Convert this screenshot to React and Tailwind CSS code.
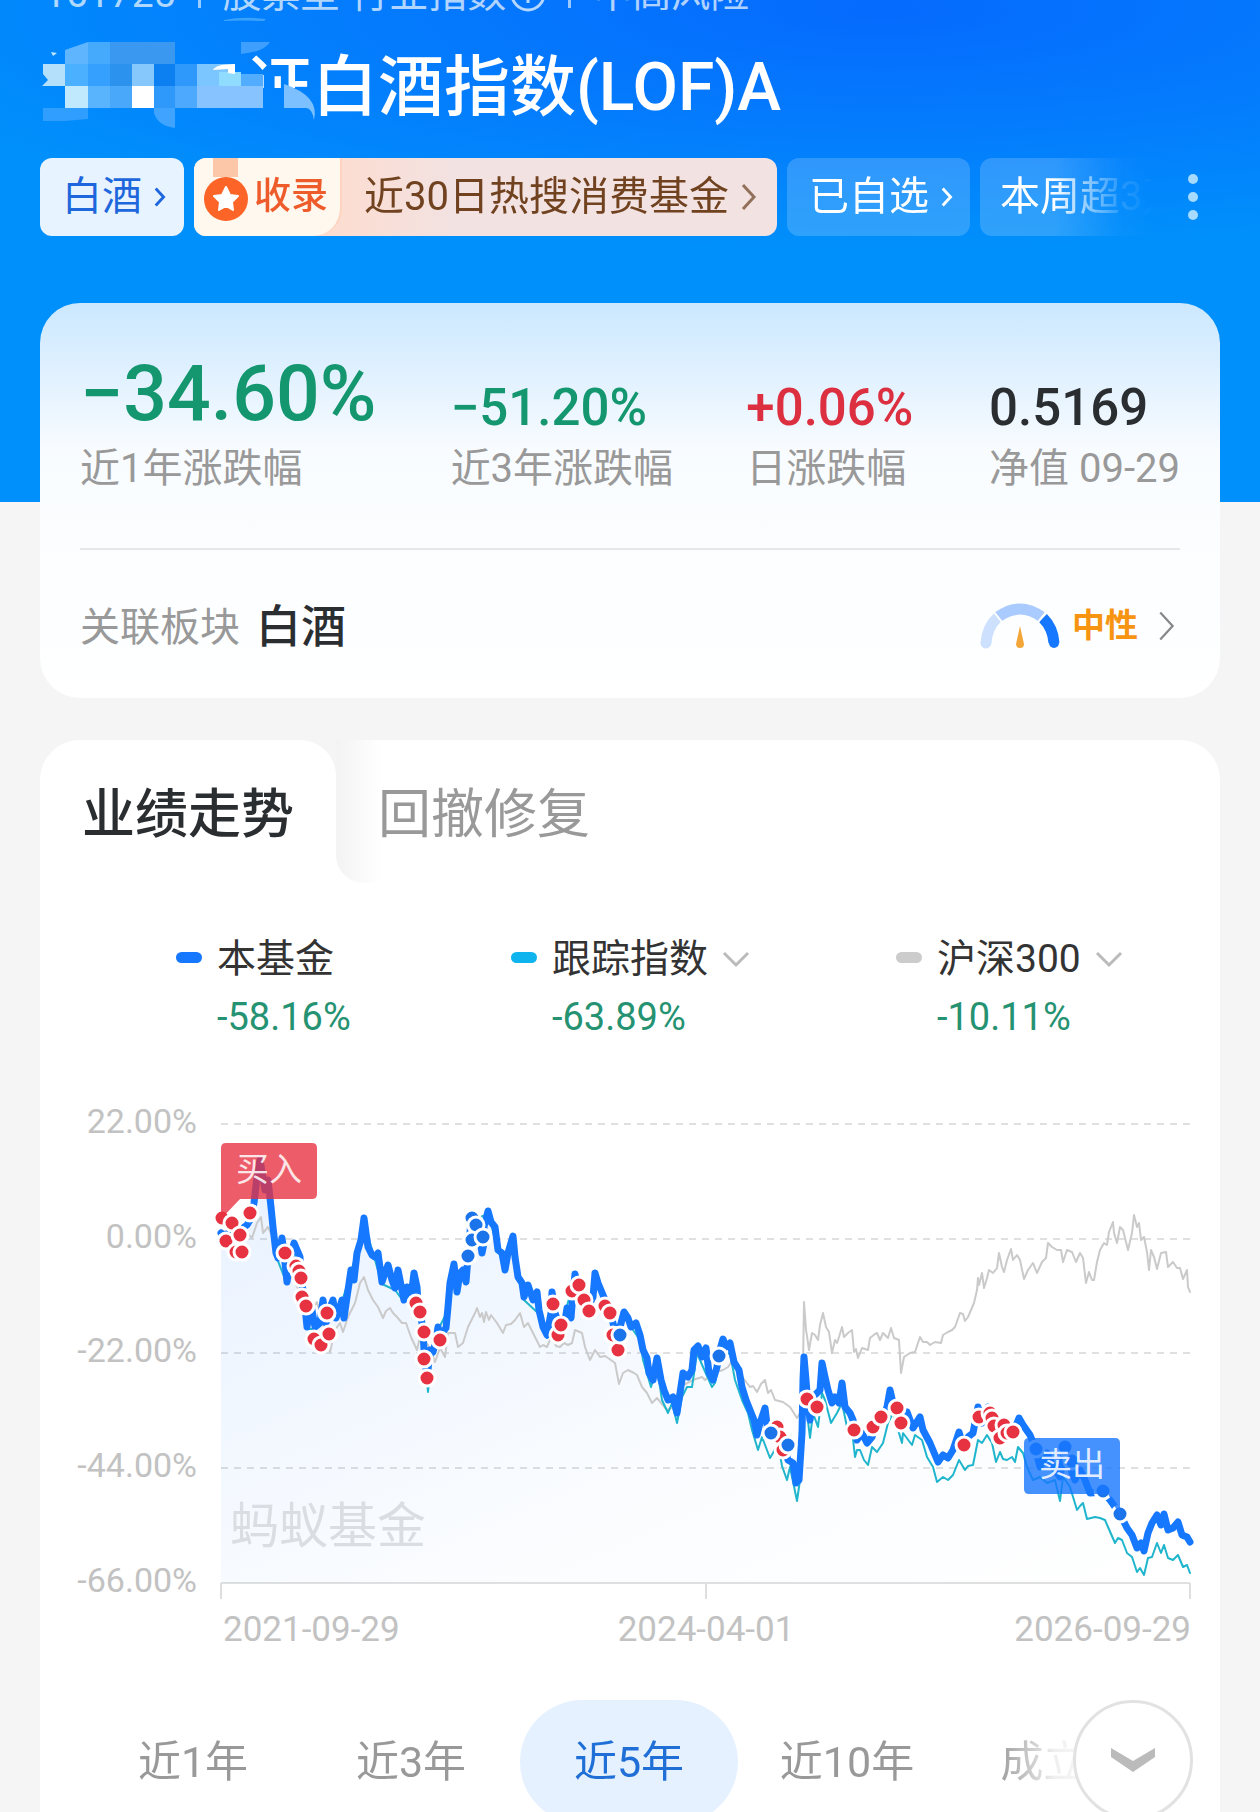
import { useState } from 'react';

const stats = [
  { label: '近1年涨跌幅', value: '−34.60%', style: 'text-[77px] leading-[94px] text-[#14976f]' },
  { label: '近3年涨跌幅', value: '−51.20%', style: 'text-[51px] leading-[66px] text-[#14976f]' },
  { label: '日涨跌幅', value: '+0.06%', style: 'text-[51px] leading-[66px] text-[#dc2f40]' },
  { label: '净值 09-29', value: '0.5169', style: 'text-[51px] leading-[66px] text-[#2b2e31]' },
];

const legend = [
  { name: '本基金', value: '-58.16%', color: 'bg-[#1677ff]' },
  { name: '跟踪指数', value: '-63.89%', color: 'bg-[#0fb4ee]', menu: true },
  { name: '沪深300', value: '-10.11%', color: 'bg-[#cccccc]', menu: true },
];

const periods = ['近1年', '近3年', '近5年', '近10年', '成立来'];

const yAxis = [
  { y: 24, label: '22.00%' },
  { y: 139, label: '0.00%' },
  { y: 253, label: '-22.00%' },
  { y: 368, label: '-44.00%' },
  { y: 483, label: '-66.00%' },
];

const fundLine = '181,133 185,137 193,127 200,130 207,125 210,120 214,103 217,77 220,60 223,77 225,90 228,80 231,107 233,127 236,153 238,158 242,138 244,153 247,182 250,160 254,143 257,150 260,157 261,177 264,197 267,227 269,213 272,210 275,227 280,223 283,200 286,223 289,210 293,200 296,218 299,210 302,200 304,218 307,197 311,170 314,180 317,153 321,140 324,118 326,133 328,147 332,155 335,157 338,153 342,182 345,173 348,165 352,180 355,188 358,170 362,190 364,200 367,187 371,197 374,173 377,187 378,203 381,217 383,230 384,250 387,277 390,250 393,252 396,240 398,227 401,237 403,232 406,228 408,207 410,183 414,164 417,192 420,173 423,170 426,182 428,157 431,120 433,117 435,125 439,133 442,153 444,143 444,127 448,111 451,122 455,127 458,150 462,153 465,170 468,153 473,136 475,157 478,177 482,183 484,197 488,185 493,200 497,192 499,210 503,227 507,235 511,213 512,192 515,213 520,227 524,227 527,208 531,218 533,193 535,174 537,183 543,197 548,207 553,197 555,173 558,183 563,195 568,207 573,223 577,240 580,227 584,212 588,218 591,227 596,223 600,235 603,250 607,258 609,273 613,280 617,258 621,280 624,290 628,300 633,297 637,313 640,293 643,273 648,277 652,270 654,250 658,246 662,257 666,248 669,273 673,280 677,267 679,253 683,239 686,247 690,243 694,262 699,270 702,287 706,300 710,310 714,320 717,335 720,323 725,308 728,333 737,327 740,337 743,343 748,360 753,363 756,383 759,380 762,333 763,280 764,257 766,280 767,293 770,320 773,297 777,293 780,290 782,263 785,277 788,290 792,303 795,297 799,303 802,283 805,307 810,313 813,320 817,340 822,333 827,343 832,337 837,323 842,320 847,307 850,290 853,303 858,313 863,320 867,312 873,328 880,317 883,330 890,343 898,362 903,355 908,358 913,350 919,332 923,345 928,337 933,333 938,307 942,323 948,307 952,313 957,323 960,337 967,330 973,333 979,318 983,325 990,335 995,347 1000,367 1007,353 1013,367 1020,377 1025,347 1030,367 1035,380 1040,370 1045,380 1050,393 1063,392 1070,400 1080,414 1087,428 1092,435 1097,448 1101,443 1104,451 1108,433 1112,423 1117,415 1121,425 1124,414 1128,430 1133,428 1138,422 1142,435 1147,437 1150,442';

const trackLine = '181,134 193,129 207,126 214,106 220,66 228,84 236,156 247,184 254,146 261,180 267,229 275,229 283,203 296,220 311,173 324,122 335,160 342,184 355,190 364,202 374,176 384,252 388,292 391,262 398,230 408,210 414,168 426,184 433,120 448,114 465,172 473,139 484,200 499,214 507,238 512,197 520,230 535,178 548,210 555,177 568,210 577,244 584,217 600,240 603,260 611,287 617,267 622,300 628,313 632,303 637,323 642,297 647,287 652,287 657,253 663,267 672,287 675,283 680,257 690,253 695,280 702,300 708,313 712,330 718,350 722,337 730,358 733,353 738,343 742,366 747,380 750,367 757,401 761,373 764,285 767,313 770,338 773,313 778,327 782,293 785,300 791,323 797,313 802,303 807,327 812,330 815,357 817,350 820,350 824,360 828,365 832,347 837,352 843,343 848,323 853,313 862,343 863,333 872,345 875,335 882,340 887,357 893,367 897,382 903,377 908,380 913,375 919,360 925,370 928,366 933,365 938,340 942,343 947,335 952,343 956,362 960,352 963,359 967,360 972,357 975,362 978,347 983,353 987,367 993,380 1000,377 1007,383 1015,380 1020,401 1023,377 1030,387 1037,410 1040,406 1043,403 1047,419 1055,417 1060,418 1065,420 1068,427 1075,443 1078,438 1082,440 1087,453 1092,457 1097,472 1100,468 1104,475 1108,458 1112,457 1117,443 1121,453 1124,445 1128,458 1133,460 1138,455 1143,467 1147,465 1150,473';

const csiLine = '181,130 190,134 200,128 207,133 212,138 217,123 221,117 223,133 228,127 233,138 240,150 250,175 262,195 272,210 277,202 283,223 290,252 295,230 300,223 303,232 308,217 315,203 320,183 324,177 328,190 333,200 338,207 343,218 346,211 350,208 353,213 357,217 362,223 366,223 371,237 377,250 380,237 388,245 395,262 400,248 405,257 408,233 415,233 418,247 423,243 428,227 435,213 437,208 440,217 442,213 444,222 446,212 449,220 451,215 457,223 463,233 466,225 471,224 475,220 480,213 484,227 488,223 493,233 500,247 503,245 507,247 510,240 513,238 516,246 520,247 524,243 528,245 532,243 535,230 542,233 545,247 550,260 555,250 560,257 565,256 568,258 575,263 579,284 583,273 588,270 594,273 597,275 602,287 607,293 612,303 617,298 627,310 633,307 640,287 653,280 662,277 665,280 673,273 683,270 688,267 693,260 703,278 710,287 713,286 717,292 721,284 725,280 728,293 731,290 735,300 743,302 750,307 757,318 760,313 763,267 764,202 766,230 767,236 769,250 772,233 775,235 778,240 780,225 783,213 786,227 789,232 792,253 795,240 797,243 799,237 802,227 804,237 808,233 812,230 814,252 816,249 818,258 822,248 828,250 830,238 835,234 837,233 840,240 843,233 848,238 851,228 854,238 859,240 861,273 864,257 870,253 875,252 880,237 883,242 887,242 890,245 895,242 901,243 903,235 908,232 912,230 915,227 920,213 923,214 925,221 928,217 934,203 937,190 938,178 939,185 942,173 944,188 947,178 949,170 953,173 957,168 959,153 962,167 964,172 967,160 971,149 973,160 977,155 980,160 984,179 988,170 993,163 997,173 1002,162 1006,158 1008,143 1012,147 1017,150 1021,150 1023,162 1027,150 1032,152 1036,162 1040,153 1043,158 1046,183 1049,172 1052,180 1054,180 1057,162 1060,150 1064,143 1067,145 1069,132 1073,122 1074,133 1077,143 1080,127 1083,130 1088,150 1092,133 1094,115 1097,127 1099,123 1101,140 1104,137 1107,152 1109,170 1111,150 1114,157 1117,169 1121,153 1126,152 1128,167 1133,162 1137,168 1140,168 1143,179 1147,170 1148,187 1150,192';

// [x, y, side], b = buy, s = sell
const trades = [
  [182, 118, 'b'], [192, 123, 'b'], [186, 141, 'b'], [196, 152, 'b'], [200, 135, 'b'], [202, 152, 'b'], [210, 113, 'b'],
  [245, 153, 'b'], [256, 166, 'b'], [259, 171, 'b'], [261, 178, 'b'], [262, 197, 'b'], [266, 206, 'b'],
  [274, 239, 'b'], [281, 245, 'b'], [287, 213, 'b'], [289, 234, 'b'],
  [376, 203, 'b'], [380, 212, 'b'], [384, 232, 'b'], [384, 259, 'b'], [387, 278, 'b'], [400, 240, 'b'],
  [432, 118, 's'], [436, 125, 's'], [432, 140, 's'], [443, 137, 's'], [428, 156, 's'],
  [513, 204, 'b'], [518, 235, 'b'], [521, 225, 'b'], [532, 191, 'b'], [539, 185, 'b'], [544, 200, 'b'], [549, 211, 'b'],
  [565, 206, 'b'], [570, 213, 'b'], [573, 235, 'b'], [578, 250, 'b'], [580, 235, 's'], [679, 256, 's'],
  [737, 327, 'b'], [740, 337, 'b'], [743, 350, 'b'], [731, 333, 's'], [748, 345, 's'],
  [767, 299, 'b'], [777, 307, 'b'], [814, 330, 'b'], [833, 327, 'b'], [841, 317, 'b'], [857, 308, 'b'], [861, 323, 'b'],
  [924, 345, 'b'], [939, 317, 'b'], [950, 313, 'b'], [952, 318, 'b'], [954, 326, 'b'], [964, 325, 'b'], [960, 338, 'b'], [967, 333, 'b'], [973, 332, 'b'],
  [996, 349, 's'], [1025, 347, 's'], [1032, 361, 's'], [1063, 391, 's'], [1080, 414, 's'],
];

function Chevron({ className }) {
  return (
    <svg viewBox="0 0 16 28" className={className} fill="none" stroke="currentColor" aria-hidden="true">
      <path d="M2 2L13 14L2 26" />
    </svg>
  );
}

function ChevronDown({ className }) {
  return (
    <svg viewBox="0 0 28 18" className={className} fill="none" stroke="currentColor" aria-hidden="true">
      <path d="M2 3L14 15L26 3" />
    </svg>
  );
}

function Mosaic() {
  return (
    <svg viewBox="0 0 280 112" className="absolute -top-8 left-0 h-28 w-[280px]" aria-hidden="true">
      <path d="M184 4Q204 0 226 3L224 5Q204 4 184 5Z" fill="#3ba2fb" />
      <path d="M11 36L17 37L13 40Z" fill="#bfe5ff" />
      <path d="M25 34L48 26V48H25Z" fill="#5fb6ff" />
      <path d="M48 26L56 26H70V48H48Z" fill="#45a9fc" />
      <path d="M70 26H135V48H70Z" fill="#3b98f0" />
      <path d="M201 26H230Q224 36 201 38Z" fill="#3f9fff" />
      <path d="M3 48H25V70H2L8 64L3 58Z" fill="#b5e0fb" />
      <path d="M25 48H48V70H25Z" fill="#4bb0ff" />
      <path d="M48 48H70V70H48Z" fill="#35a0fe" />
      <path d="M70 48H92V70H70Z" fill="#2b93ee" />
      <path d="M92 48H114V70H92Z" fill="#86c8fb" />
      <path d="M114 48H135V70H114Z" fill="#0c80f0" />
      <path d="M135 48H157V70H135Z" fill="#2f98fb" />
      <path d="M157 48H195V70H157Z" fill="#7cc6ff" />
      <path d="M179 56H201V70H179Z" fill="#8fdcff" />
      <path d="M201 58H223V70H201Z" fill="#52acff" />
      <path d="M173 54Q176 48 195 48V58L188 57V53Z" fill="#fff" />
      <path d="M25 70H48V92H25Z" fill="#c0e9fd" />
      <path d="M48 70H70V92H48Z" fill="#5ab4fd" />
      <path d="M70 70H92V92H70Z" fill="#4aa8fb" />
      <path d="M92 70H114V92H92Z" fill="#fff" />
      <path d="M114 70H135V92H114Z" fill="#2f98fb" />
      <path d="M135 70H157V92H135Z" fill="#4da9fd" />
      <path d="M157 70H223V92H157Z" fill="#86c3ff" />
      <path d="M244 68Q280 80 274 104Q272 92 266 92H244Z" fill="#7cc0ff" />
      <path d="M3 92H48V103L25 105H3Z" fill="#309efe" />
      <path d="M114 92H135V112Q118 110 114 97Z" fill="#3fa3ff" />
    </svg>
  );
}

function Medal() {
  return (
    <svg viewBox="0 0 48 78" className="h-[78px] w-12 shrink-0" aria-hidden="true">
      <path d="M11 0H36V19H11Z" fill="#fcc7a8" />
      <circle cx="24" cy="41" r="22" fill="#fd6428" />
      <path d="M24 29L28 37L36 38L30 44L31 52L24 48L17 52L18 44L12 38L20 37Z" fill="#fff" stroke="#fff" strokeWidth="2" strokeLinejoin="round" />
    </svg>
  );
}

function Gauge() {
  return (
    <svg viewBox="0 0 80 46" className="h-[46px] w-20" fill="none" strokeWidth="11" aria-hidden="true">
      <path d="M6 40Q7 24 18 14" stroke="#cde1ff" strokeLinecap="round" />
      <path d="M18 14Q40 -2 62 14" stroke="#a9cbff" />
      <path d="M63 15Q73 25 74 40" stroke="#1677ff" />
      <circle cx="74" cy="40" r="5" fill="#1677ff" stroke="none" />
      <path d="M14 9L22 19M66 9L58 19" stroke="#fff" strokeWidth="2" />
      <path d="M40 23L44 41Q44 45 40 45Q36 45 36 41Z" fill="#f3a63a" stroke="none" />
    </svg>
  );
}

function Header() {
  return (
    <header className="bg-[#0090fb] bg-[radial-gradient(ellipse_85%_240px_at_70%_10px,#056afe_0%,#047cfd_50%,#0090fb_100%)] px-10 pb-[266px] text-white">
      <div className="flex h-3 items-end whitespace-nowrap text-[39px] leading-[36px] text-white/70">
        <p className="flex items-center gap-[22px] pl-1">
          <span>161725</span>
          <span className="h-7 w-[3px] bg-white/60" />
          <span className="flex items-center gap-1">
            股票型-行业指数
            <svg viewBox="0 0 36 36" className="size-9" fill="none" stroke="currentColor" strokeWidth="3" aria-hidden="true">
              <circle cx="18" cy="18" r="16" />
              <path d="M18 16V27M18 9V12" />
            </svg>
          </span>
          <span className="h-7 w-[3px] bg-white/60" />
          <span>中高风险</span>
        </p>
      </div>
      <div className="relative mt-9">
        <h1 className="whitespace-nowrap pl-[206px] text-[66px] font-medium leading-[80px]">
          <span className="inline-block [clip-path:inset(0_0_50%_0)]">证</span>白酒指数(LOF)A
        </h1>
        <Mosaic />
      </div>
      <div className="mt-[30px] flex items-center justify-between">
        <div className="flex min-w-0 flex-1 gap-[10px] overflow-hidden whitespace-nowrap text-[40px] leading-[78px] [mask-image:linear-gradient(to_right,#000_90%,rgb(0_0_0/0.15)_96%,transparent_99%)]">
          <a href="#sector" className="flex shrink-0 items-center gap-3 rounded-xl bg-[#e7f4ff] pl-[22px] pr-[18px] text-[#1d66dc]">
            白酒
            <Chevron className="h-5 w-3 stroke-[4]" />
          </a>
          <a href="#ranking" className="flex shrink-0 items-center rounded-xl bg-[#f2e2e2] bg-[linear-gradient(to_right,#ffdccd_20%,#f2e2e2_45%)] pr-5 text-[#70421f]">
            <span className="flex items-center rounded-l-xl rounded-br-[28px] border-r-2 border-[#ffd3bd] bg-[#fff8ee] pl-2 pr-3 font-medium text-[#ee5c2c]">
              <Medal />
              <span className="pl-1 text-[37px]">收录</span>
            </span>
            <span className="pl-[22px] pr-3">近30日热搜消费基金</span>
            <Chevron className="h-7 w-4 stroke-[3] text-[#92705a]" />
          </a>
          <button className="flex shrink-0 items-center gap-3 rounded-xl bg-white/18 pl-[22px] pr-[17px]">
            已自选
            <Chevron className="h-5 w-3 stroke-[4]" />
          </button>
          <a href="#week" className="shrink-0 rounded-xl bg-white/18 px-5">本周超3万人</a>
        </div>
        <button aria-label="更多" className="flex w-[54px] shrink-0 flex-col items-center gap-2">
          <span className="size-[10px] rounded-full bg-[#a6daff]" />
          <span className="size-[10px] rounded-full bg-[#a6daff]" />
          <span className="size-[10px] rounded-full bg-[#a6daff]" />
        </button>
      </div>
    </header>
  );
}

function Summary() {
  return (
    <section className="relative mx-10 -mt-[199px] rounded-[40px] bg-[linear-gradient(to_bottom,#cbe8ff_0%,#e3f2ff_20%,#f9fcff_38%,#fcfeff_70%,#fff_100%)] px-10 pt-11">
      <dl className="grid grid-cols-[371fr_296fr_243fr_190fr] items-end border-b-2 border-[#e4e8ea] pb-[51px]">
        {stats.map((s) => (
          <div key={s.label} className="flex flex-col-reverse whitespace-nowrap">
            <dt className="text-[40px] leading-[56px] text-[#999]">{s.label}</dt>
            <dd className={`font-medium ${s.style}`}>{s.value}</dd>
          </div>
        ))}
      </dl>
      <a href="#sector" className="flex items-center pb-[42px] pt-[50px]">
        <span className="text-[40px] leading-[56px] text-[#999]">关联板块</span>
        <span className="ml-4 text-[45px] font-medium leading-[56px] text-[#2b2e31]">白酒</span>
        <span className="mb-1 ml-auto flex items-center">
          <Gauge />
          <span className="ml-3 text-[33px] font-bold leading-[52px] text-[#f79412]">中性</span>
          <Chevron className="ml-5 mr-1 h-8 w-[18px] stroke-2 text-[#888]" />
        </span>
      </a>
    </section>
  );
}

function Chart() {
  return (
    <svg viewBox="0 0 1180 560" className="mt-[53px] h-auto w-full" role="img" aria-label="业绩走势">
      <defs>
        <linearGradient id="area" x1="0" y1="0" x2="1" y2="1">
          <stop offset="0" stopColor="#1677ff" stopOpacity="0.1" />
          <stop offset="0.6" stopColor="#1677ff" stopOpacity="0.02" />
          <stop offset="1" stopColor="#1677ff" stopOpacity="0" />
        </linearGradient>
      </defs>
      <g fontSize="34" fill="#c2c2c2">
        {yAxis.map((t) => (
          <g key={t.label}>
            <text x="157" y={t.y + 9} textAnchor="end">{t.label}</text>
            <line x1="181" x2="1150" y1={t.y} y2={t.y} stroke="#e0e0e0" strokeWidth="2" strokeDasharray={t.y === 483 ? 'none' : '7 6'} />
          </g>
        ))}
        <path d="M181 483V499M666 483V499M1150 483V499" stroke="#dedede" strokeWidth="2" />
      </g>
      <g fontSize="35" fill="#c2c2c2">
        <text x="183" y="541">2021-09-29</text>
        <text x="666" y="541" textAnchor="middle">2024-04-01</text>
        <text x="1151" y="541" textAnchor="end">2026-09-29</text>
      </g>
      <polygon points={`181,483 ${fundLine} 1150,483`} fill="url(#area)" />
      <text x="190" y="443" fontSize="49" fill="#dadde1">蚂蚁基金</text>
      <g fill="none" strokeLinejoin="round" strokeLinecap="round">
        <polyline points={csiLine} stroke="#cacaca" strokeWidth="2" />
        <polyline points={trackLine} stroke="#1fb5cd" strokeWidth="2" />
        <polyline points={fundLine} stroke="#1677ff" strokeWidth="7" />
      </g>
      {trades.map(([x, y, side], i) => (
        <circle key={i} cx={x} cy={y} r="8" fill={side === 'b' ? '#e73241' : '#1c74ea'} stroke="#fff" strokeWidth="3" />
      ))}
      <path d="M186 43H272Q277 43 277 48V94Q277 99 272 99H200L181 119V48Q181 43 186 43Z" fill="#e8303f" fillOpacity="0.78" />
      <text x="229" y="81" fontSize="33" textAnchor="middle" fill="#fff" fillOpacity="0.85">买入</text>
      <path d="M989 338H1075Q1080 338 1080 343V416L1068 394H989Q984 394 984 389V343Q984 338 989 338Z" fill="#1677ff" fillOpacity="0.8" />
      <text x="1032" y="376" fontSize="33" textAnchor="middle" fill="#fff" fillOpacity="0.85">卖出</text>
    </svg>
  );
}

function Performance() {
  const [tab, setTab] = useState('trend');
  const [period, setPeriod] = useState('近5年');

  return (
    <section className="mx-10 mt-[42px] overflow-hidden rounded-t-[40px] bg-white">
      <div role="tablist" className="flex text-[53px] leading-[135px]">
        <div className="bg-[#f5f5f5]">
          <button role="tab" aria-selected={tab === 'trend'} onClick={() => setTab('trend')} className="rounded-tr-[36px] bg-white px-[42px] pt-2 font-medium text-[#2b2e31]">
            业绩走势
          </button>
        </div>
        <button role="tab" aria-selected={tab === 'drawdown'} onClick={() => setTab('drawdown')} className="rounded-bl-[28px] bg-[linear-gradient(to_right,#f3f3f3,#fff_45px)] px-[42px] pt-2 text-[#999]">
          回撤修复
        </button>
      </div>

      {/* Legend */}
      <div className="grid grid-cols-[335fr_385fr_324fr] pl-[136px] pt-12">
        {legend.map((l) => (
          <div key={l.name} className="grid grid-cols-[26px_1fr] items-center gap-x-[15px]">
            <span className={`mb-1 h-[11px] rounded-full ${l.color}`} />
            {l.menu ? (
              <button className="flex items-center gap-[14px] text-[39px] leading-[56px] text-[#333]">
                {l.name}
                <ChevronDown className="h-[18px] w-7 stroke-[3] text-[#bbb]" />
              </button>
            ) : (
              <span className="text-[39px] leading-[56px] text-[#333]">{l.name}</span>
            )}
            <span className="col-start-2 text-[38px] leading-[60px] text-[#259272]">{l.value}</span>
          </div>
        ))}
      </div>

      <Chart />

      {/* Period picker */}
      <div className="relative mt-10">
        <div className="flex overflow-hidden pl-11 [mask-image:linear-gradient(to_right,#000_81%,rgb(0_0_0/0.15)_86%,transparent_91%)]">
          {periods.map((p) => (
            <button
              key={p}
              onClick={() => setPeriod(p)}
              className={`w-[218px] shrink-0 rounded-full text-[43px] leading-[124px] ${p === period ? 'bg-[#e6f1ff] text-[#1f6fd6]' : 'text-[#999]'}`}
            >
              {p}
            </button>
          ))}
        </div>
        <button aria-label="展开" className="absolute right-[27px] top-0 flex size-[120px] items-center justify-center rounded-full border-3 border-[#e2e2e2] bg-white text-[#bbb]">
          <svg viewBox="0 0 46 26" className="h-[26px] w-[46px]" fill="currentColor" aria-hidden="true">
            <path d="M1 1L23 14L45 1V10L23 25L1 10Z" />
          </svg>
        </button>
      </div>
    </section>
  );
}

export default function App() {
  return (
    <main className="h-screen overflow-y-auto overflow-x-hidden bg-[#f5f5f5] font-[Roboto,'Noto_Sans_CJK_SC',sans-serif] [scrollbar-width:none]">
      <Header />
      <Summary />
      <Performance />
    </main>
  );
}
